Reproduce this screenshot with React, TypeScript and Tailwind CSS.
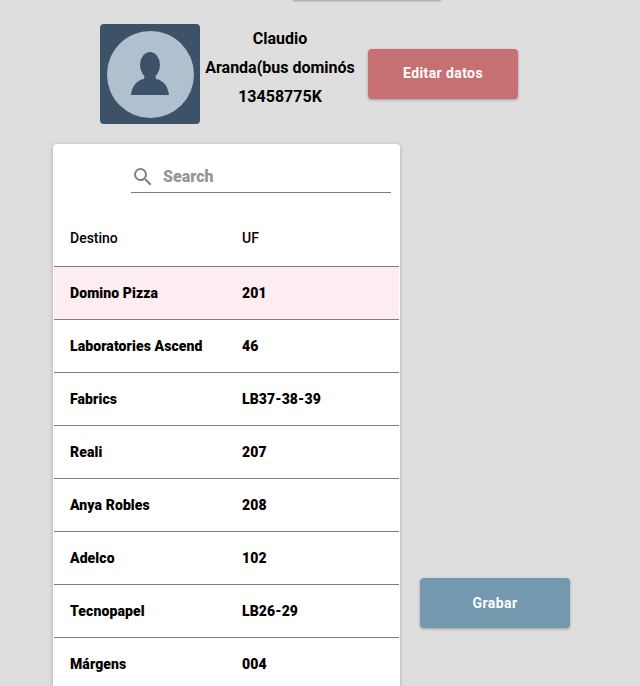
import { MdSearch } from 'react-icons/md'

const ROWS = [
  { destino: 'Domino Pizza', uf: '201', selected: true },
  { destino: 'Laboratories Ascend', uf: '46' },
  { destino: 'Fabrics', uf: 'LB37-38-39' },
  { destino: 'Reali', uf: '207' },
  { destino: 'Anya Robles', uf: '208' },
  { destino: 'Adelco', uf: '102' },
  { destino: 'Tecnopapel', uf: 'LB26-29' },
  { destino: 'Márgens', uf: '004' },
]

function Avatar() {
  return (
    <div className="flex h-[100px] w-[100px] shrink-0 items-center justify-center rounded-[4px] bg-[#3b5268]">
      <div className="flex h-[87px] w-[87px] items-center justify-center rounded-full bg-[#b1c0ce]">
        <svg width="38" height="44" viewBox="0 0 38 44" className="mb-[1px]">
          <ellipse cx="19" cy="13" rx="10" ry="13" fill="#3b5268" />
          <path d="M14 22 L24 22 L25 27 C32 28 37 34 38 43 L0 43 C1 34 6 28 13 27 Z" fill="#3b5268" />
        </svg>
      </div>
    </div>
  )
}

export default function App() {
  return (
    <div className="h-[686px] w-[640px] overflow-hidden bg-[#dedede] font-['Roboto',sans-serif]">
      <div className="ml-[294px] h-0 w-[146px] shadow-[0_0_2px_1px_rgba(0,0,0,0.3)]" />

      <div className="flex pl-[100px] pt-[24px]">
        <Avatar />
        <div className="mr-[8px] flex w-[160px] shrink-0 flex-col items-center text-[16px] font-bold leading-[29px] text-black">
          <div>Claudio</div>
          <div>Aranda(bus dominós</div>
          <div>13458775K</div>
        </div>
        <button className="mt-[25px] h-[50px] w-[150px] rounded-[4px] bg-[#c77073] pb-[2px] text-[14px] font-bold tracking-[0.4px] text-white shadow-[0_1px_3px_rgba(0,0,0,0.3)]">
          Editar datos
        </button>
      </div>

      <div className="flex pl-[53px] pt-[20px]">
        <div className="w-[347px] shrink-0 rounded-[4px] bg-white p-px shadow-[0_1px_4px_rgba(0,0,0,0.25)]">
          <div className="flex pl-[77px] pr-[8px] pt-[16px]">
            <div className="flex h-[32px] w-full items-center border-b border-[#807c7f]">
              <MdSearch size={24} className="text-[#808080]" />
              <span className="ml-[8px] text-[16px] font-black text-[#979797]">Search</span>
            </div>
          </div>

          <div className="mt-[20px] flex h-[54px] items-center border-b border-[#807c7f] pb-[2px] pl-[16px] text-[14px] font-medium text-black">
            <div className="w-[172px]">Destino</div>
            <div>UF</div>
          </div>

          {ROWS.map((row) => (
            <div
              key={row.destino}
              className={`flex h-[53px] items-center border-b border-[#807c7f] pl-[16px] text-[14px] font-black tracking-[0.1px] text-black ${row.selected ? 'bg-[#fdecf0]' : 'bg-white'}`}
            >
              <div className="w-[172px]">{row.destino}</div>
              <div>{row.uf}</div>
            </div>
          ))}
        </div>

        <button className="ml-[20px] mt-[434px] h-[50px] w-[150px] shrink-0 rounded-[4px] bg-[#7498ad] text-[14px] font-bold tracking-[0.4px] text-white shadow-[0_1px_3px_rgba(0,0,0,0.3)]">
          Grabar
        </button>
      </div>
    </div>
  )
}
